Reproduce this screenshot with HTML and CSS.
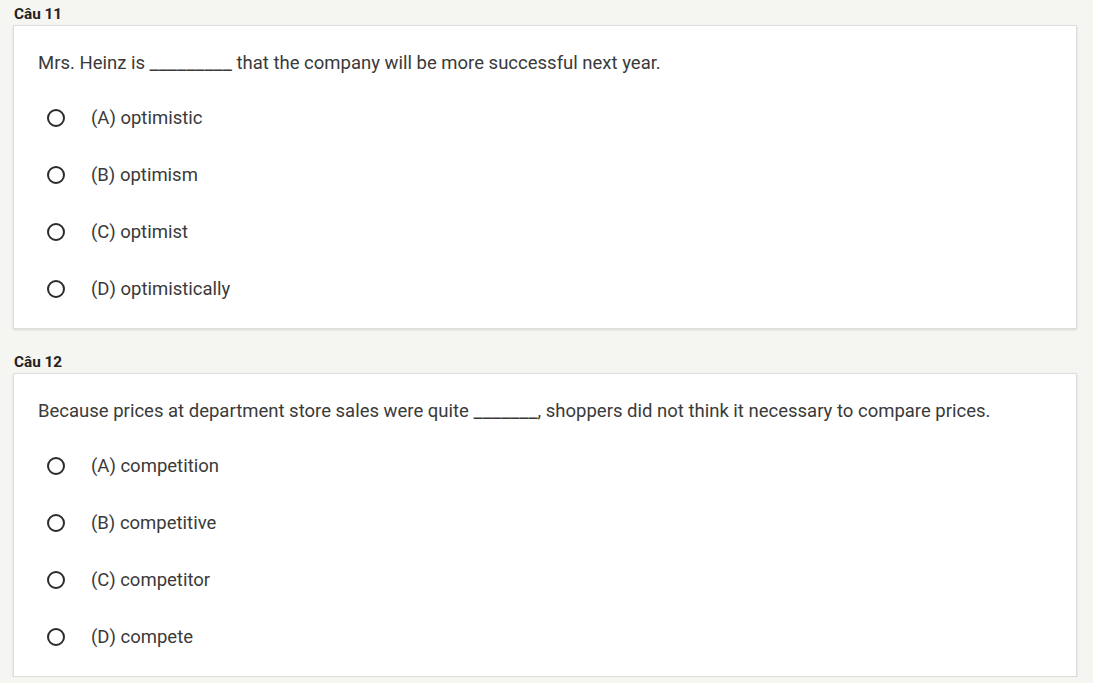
FILE: index.html
```html
<!DOCTYPE html>
<html>
<head>
<meta charset="utf-8">
<link rel="stylesheet" href="styles.css">
</head>
<body>
<div class="quiz">
  <section class="question">
    <div class="q-label">Câu 11</div>
    <div class="card">
      <p class="q-text">Mrs. Heinz is <span class="blank">_________</span> that the company will be more successful next year.</p>
      <ul class="options">
        <li class="option"><span class="radio"></span><span class="opt-text">(A) optimistic</span></li>
        <li class="option"><span class="radio"></span><span class="opt-text">(B) optimism</span></li>
        <li class="option"><span class="radio"></span><span class="opt-text">(C) optimist</span></li>
        <li class="option"><span class="radio"></span><span class="opt-text">(D) optimistically</span></li>
      </ul>
    </div>
  </section>
  <section class="question">
    <div class="q-label">Câu 12</div>
    <div class="card">
      <p class="q-text">Because prices at department store sales were quite <span class="blank">_______</span>, shoppers did not think it necessary to compare prices.</p>
      <ul class="options">
        <li class="option"><span class="radio"></span><span class="opt-text">(A) competition</span></li>
        <li class="option"><span class="radio"></span><span class="opt-text">(B) competitive</span></li>
        <li class="option"><span class="radio"></span><span class="opt-text">(C) competitor</span></li>
        <li class="option"><span class="radio"></span><span class="opt-text">(D) compete</span></li>
      </ul>
    </div>
  </section>
</div>
</body>
</html>
```
FILE: styles.css
```css
html, body {
  margin: 0;
  padding: 0;
  background: #f5f5f1;
  font-family: Roboto, "Liberation Sans", Arial, sans-serif;
}
.quiz {
  padding: 0 16px 0 13px;
}
.question + .question {
  margin-top: 19px;
}
.q-label {
  padding-top: 4px;
  padding-left: 1px;
  height: 20px;
  line-height: 20px;
  font-size: 15.3px;
  font-weight: 700;
  color: #222;
  margin-bottom: 1px;
}
.card {
  background: #fff;
  border: 1px solid #dddddb;
  box-shadow: 0 1px 2px rgba(0,0,0,0.12);
  padding: 25px 24px 11px 24px;
}
.q-text {
  margin: 0;
  font-size: 18.5px;
  line-height: 24px;
  color: #3a3a3a;
}
.blank {
  font-size: 20.3px;
  line-height: 18px;
}
.options {
  list-style: none;
  margin: 14px 0 0 0;
  padding: 0;
}
.option {
  display: flex;
  align-items: center;
  height: 57px;
  padding-left: 9px;
}
.radio {
  box-sizing: border-box;
  width: 18px;
  height: 18px;
  border: 2px solid #2b2b2b;
  border-radius: 50%;
  flex: none;
}
.opt-text {
  margin-left: 26px;
  font-size: 18.5px;
  color: #3a3a3a;
}
```
